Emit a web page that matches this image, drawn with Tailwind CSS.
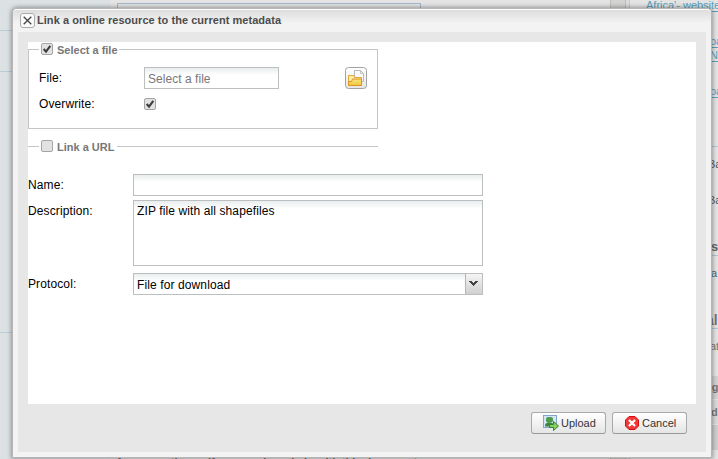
<!DOCTYPE html>
<html lang="en">
<head>
<meta charset="utf-8">
<title>Link a online resource</title>
<script src="https://cdn.jsdelivr.net/npm/@tailwindcss/browser@4"></script>
</head>
<body class="relative h-[459px] w-[718px] overflow-hidden bg-[#e4e4e4] text-[12px] leading-[14px] text-black" style="font-family:'Liberation Sans',Arial,sans-serif">

<!-- Dimmed page behind the dialog -->
<div class="absolute inset-0 overflow-hidden" aria-hidden="true">
  <div class="absolute left-0 top-0 h-full w-[110px] bg-[#dce1e4]"></div>
  <div class="absolute left-0 top-[30px] h-px w-3 bg-[#b9ccd8]"></div>
  <div class="absolute left-0 top-[71px] h-px w-3 bg-[#b9ccd8]"></div>
  <div class="absolute left-0 top-[332px] h-px w-3 bg-[#b9ccd8]"></div>
  <div class="absolute left-[117px] top-[3px] h-5 w-[304px] border border-[#a3b8cc]"></div>
  <div class="absolute left-[610px] top-0 h-full w-4 border-x border-[#bdbdbd] bg-[#d3d3d1]"></div>
  <div class="absolute left-[626px] top-0 h-full w-[4px] border-r border-[#c8c8c8] bg-[#dcdcdc]"></div>
  <span class="absolute left-[646px] top-[-2px] whitespace-nowrap text-[11px] text-[#5b9fbd] underline underline-offset-2">Africa'- website</span>
  <span class="absolute left-[710px] top-[34px] text-[11px] text-[#5b9fbd] underline underline-offset-2">pa</span>
  <span class="absolute left-[710px] top-[48px] text-[11px] text-[#5b9fbd] underline underline-offset-2">N</span>
  <span class="absolute left-[710px] top-[84px] text-[11px] text-[#5b9fbd] underline underline-offset-2">pa</span>
  <div class="absolute left-[711px] top-[146px] h-px w-2 bg-[#b4cad3]"></div>
  <span class="absolute left-[708px] top-[157px] text-[11px] text-[#555]">Ba</span>
  <span class="absolute left-[708px] top-[193px] text-[11px] text-[#555]">Ba</span>
  <span class="absolute left-[711px] top-[240px] text-[13px] font-bold text-[#666]">s</span>
  <div class="absolute left-[711px] top-[255px] h-px w-2 bg-[#b4c5cb]"></div>
  <span class="absolute left-[711px] top-[266px] text-[11px] text-[#456880]">a</span>
  <span class="absolute left-[706px] top-[313px] text-[14px] font-bold text-[#777]">al</span>
  <div class="absolute left-[711px] top-[328px] h-px w-2 bg-[#aac9da]"></div>
  <span class="absolute left-[710px] top-[339px] text-[11px] text-[#777]">at</span>
  <div class="absolute left-[711px] top-[376px] h-[23px] w-2 bg-[#d2d2d2]"></div>
  <div class="absolute left-[711px] top-[400px] h-6 w-2 bg-[#dadada]"></div>
  <div class="absolute left-[711px] top-[425px] h-[25px] w-2 bg-[#cecece]"></div>
  <span class="absolute left-[705px] top-[380px] text-[11px] font-bold text-[#777]">ug</span>
  <span class="absolute left-[711px] top-[405px] text-[11px] font-bold text-[#777]">d</span>
  <span class="absolute left-[117px] top-[455px] z-10 h-[4px] overflow-hidden whitespace-nowrap text-[11px] font-bold text-[#555]">for presenting or if you need any help with this document</span>
</div>

<!-- Dialog -->
<section class="absolute left-[12px] top-[8px] flex h-[450px] w-[700px] flex-col rounded-t-[5px] border border-[#b5b5b5] bg-[#f3f3f3] px-[5px] pb-[5px] shadow-[0_0_4px_1px_rgba(0,0,0,0.35)]">
  <header class="-mx-[5px] flex h-[23px] shrink-0 items-start rounded-t-[4px] border-t border-white bg-linear-to-b from-[#dddddd] to-[#f3f3f3] to-60% pl-[7px] pt-[3px]">
    <svg class="size-[15px] shrink-0" viewBox="0 0 15 15"><rect x=".5" y=".5" width="14" height="14" rx="2.5" fill="#fafafa" stroke="#aaa"/><path d="M3.7 3.7l7.6 7.6M11.3 3.7l-7.6 7.6" stroke="#444" stroke-width="1.3"/></svg>
    <h1 class="ml-[2px] whitespace-nowrap text-[11px] font-bold leading-[14px] tracking-[0.045px] text-[#4c4c4c]">Link a online resource to the current metadata</h1>
  </header>
  <div class="flex min-h-0 flex-1 flex-col bg-[#e7e7e7] px-[10px] pt-[10px]">
    <main class="h-[362px] shrink-0 bg-white tracking-[0.11px]">
      <fieldset class="h-[87px] w-[350px] border border-[#c5c5c5]">
        <legend class="ml-[10px] flex h-[15px] w-[80px] items-start pl-[2px] pt-px tracking-normal">
          <svg class="size-[12px] shrink-0" viewBox="0 0 12 12"><rect x=".5" y=".5" width="11" height="11" rx="1.5" fill="#e2e2e2" stroke="#a5a5a5"/><path d="M2.700 6l2.300 2.600L9.300 2.800" fill="none" stroke="#3c3c3c" stroke-width="2.100"/></svg>
          <span class="ml-[4px] whitespace-nowrap text-[11px] font-bold text-[#777]">Select a file</span>
        </legend>
        <div class="ml-[10px] mt-[10px] flex h-[22px] items-start">
          <label class="w-[105px] pt-[4px]">File:</label>
          <div class="h-[22px] w-[135px] border border-[#bbbfc0] bg-linear-to-b from-[#e9eded] to-white to-35% pl-[3px] pt-[4px] tracking-[0.04px] text-[#777]">Select a file</div>
          <svg class="ml-[66px] size-[22px]" viewBox="0 0 22 22"><defs><linearGradient id="g" x2="0" y2="1"><stop stop-color="#fff"/><stop offset="1" stop-color="#e5e5e5"/></linearGradient><linearGradient id="y" x2="0" y2="1"><stop stop-color="#f7e27a"/><stop offset="1" stop-color="#efc93c"/></linearGradient></defs><rect x=".5" y=".5" width="21" height="21" rx="3" fill="url(#g)" stroke="#a2a2a2"/><path d="M9.500 3.500h6l3 3v8h-9z" fill="#f8f8f8" stroke="#b9b9b9"/><path d="M15.500 3.500v3h3" fill="none" stroke="#c5c5c5"/><path d="M3.500 18.500V8.500h5l1 2h7v8z" fill="#fff0a5" stroke="#e4a735"/><path d="M3.500 18.500v-4h3l1-2.500h9v6.500z" fill="url(#y)" stroke="#dd9129"/></svg>
        </div>
        <div class="ml-[10px] mt-[8px] flex items-start">
          <label class="w-[105px]">Overwrite:</label>
          <svg class="mt-px size-[12px]" viewBox="0 0 12 12"><rect x=".5" y=".5" width="11" height="11" rx="1.5" fill="#e2e2e2" stroke="#a5a5a5"/><path d="M2.700 6l2.300 2.600L9.300 2.800" fill="none" stroke="#3c3c3c" stroke-width="2.100"/></svg>
        </div>
      </fieldset>
      <fieldset class="mt-[10px] h-[15px] w-[350px] border-t border-[#c5c5c5]">
        <legend class="ml-[11px] flex h-[15px] w-[78px] items-start pl-[2px] pt-px tracking-normal">
          <svg class="size-[12px] shrink-0" viewBox="0 0 12 12"><rect x=".5" y=".5" width="11" height="11" rx="1.5" fill="#e2e2e2" stroke="#a5a5a5"/></svg>
          <span class="ml-[4px] whitespace-nowrap text-[11px] font-bold text-[#777]">Link a URL</span>
        </legend>
      </fieldset>
      <div class="mt-[20px] flex">
        <label class="w-[105px] pt-[4px]">Name:</label>
        <div class="h-[22px] w-[350px] border border-[#bbbfc0] bg-linear-to-b from-[#e9eded] to-white to-35%"></div>
      </div>
      <div class="mt-[4px] flex">
        <label class="w-[105px] pt-[4px]">Description:</label>
        <div class="h-[66px] w-[350px] border border-[#bbbfc0] bg-linear-to-b from-[#e9eded] to-white to-[8px] pl-[3px] pt-[3px]">ZIP file with all shapefiles</div>
      </div>
      <div class="mt-[7px] flex">
        <label class="w-[105px] pt-[4px]">Protocol:</label>
        <div class="flex h-[22px] w-[350px] border border-[#bbbfc0] bg-linear-to-b from-[#e9eded] to-white to-35%">
          <span class="flex-1 pl-[3px] pt-[4px]">File for download</span>
          <span class="flex w-[17px] items-start border-l border-[#b5b5b5] bg-linear-to-b from-[#f5f5f5] to-[#d0d0d0]"><svg class="ml-[3px] mt-[7px] h-[6px] w-[9px]" viewBox="0 0 9 6"><path d="M0 0h3v1h1v1h1V1h1V0h3v1H8v1H7v1H6v1H5v1H4V4H3V3H2V2H1V1H0z" fill="#444"/></svg></span>
        </div>
      </div>
    </main>
    <footer class="-mr-px flex justify-end gap-[6px] pr-[10px] pt-[8px]">
      <button class="flex h-[22px] w-[75px] items-start rounded-[3px] border border-[#a9a9a9] border-b-[#999] bg-linear-to-b from-white to-[#e5e5e5] pl-[11px] pt-[2px]">
        <svg class="size-[16px] shrink-0" viewBox="0 0 16 16"><rect x=".5" y=".5" width="13" height="12" fill="#d5e7f7" stroke="#83a5cb"/><path d="M2 11V9l3-2 3 2 4-2v4z" fill="#8bb879"/><rect x="3" y="2" width="7" height="5.500" rx="2" fill="#4d9a50"/><path d="M2 11.500c0-3 2-4 4.500-4s4.500 1 4.500 4z" fill="#3c873f"/><path d="M6.500 9.500h4v-3l5 4.500-5 4.500v-3h-4z" fill="#8bcb61" stroke="#2e8731"/></svg>
        <span class="ml-[2px] mt-[1px] text-[11px] text-[#333]">Upload</span>
      </button>
      <button class="flex h-[22px] w-[75px] items-start rounded-[3px] border border-[#a9a9a9] border-b-[#999] bg-linear-to-b from-white to-[#e5e5e5] pl-[11px] pt-[2px]">
        <svg class="size-[16px] shrink-0" viewBox="0 0 16 16"><path d="M5 1.500h6L14.500 5v6L11 14.500H5L1.500 11V5z" fill="#f23836" stroke="#d60c10"/><path d="M5 5l6 6M11 5l-6 6" stroke="#fff" stroke-width="2.300"/></svg>
        <span class="ml-[2px] mt-[1px] text-[11px] text-[#333]">Cancel</span>
      </button>
    </footer>
  </div>
</section>
</body>
</html>
